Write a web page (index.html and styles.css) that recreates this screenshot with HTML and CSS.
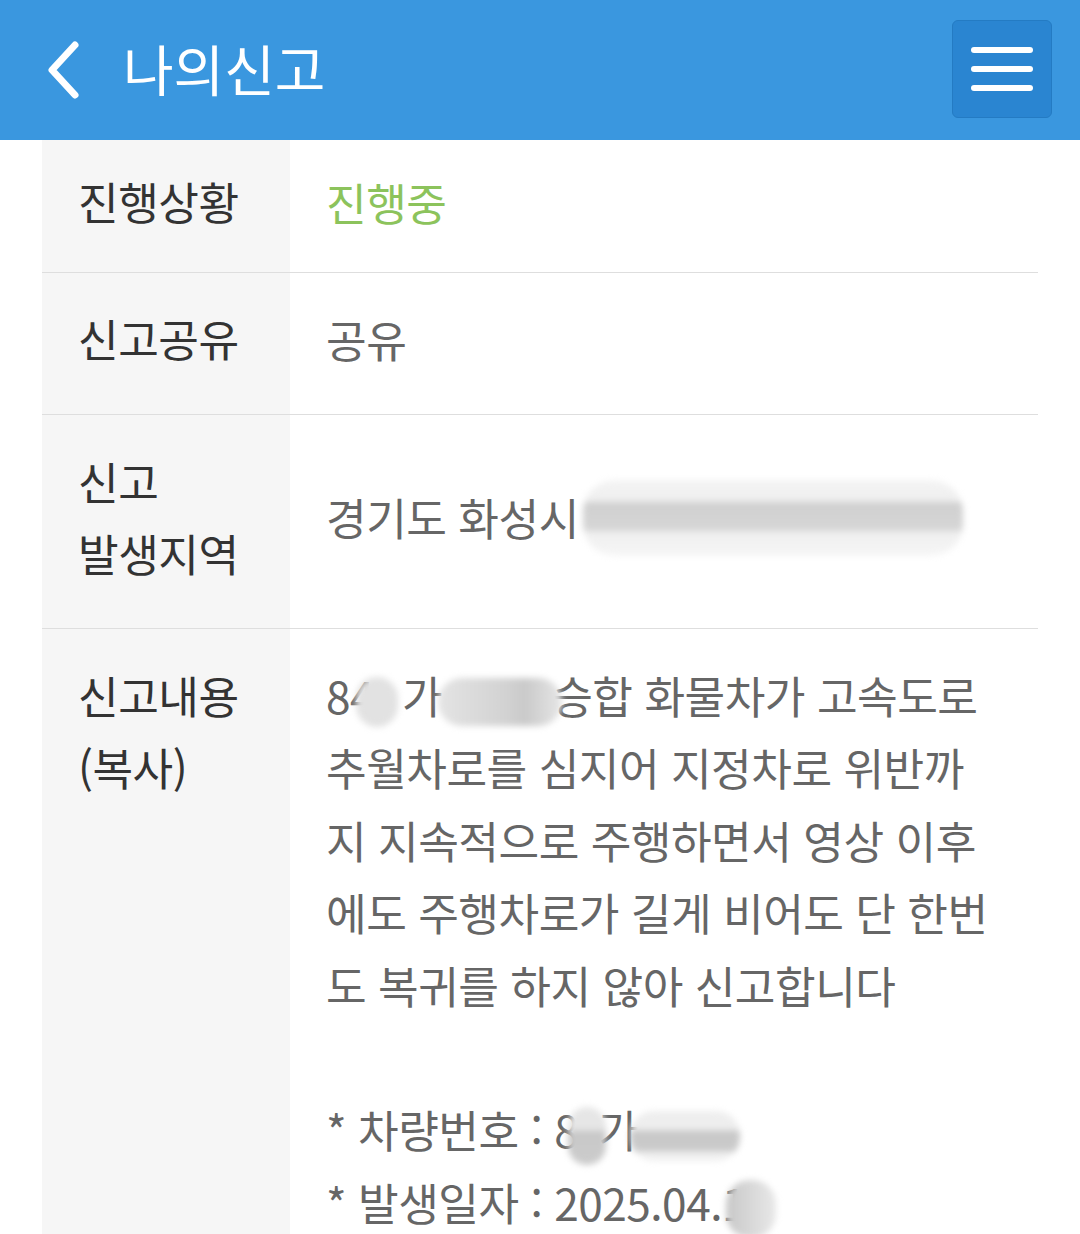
FILE: index.html
```html
<!DOCTYPE html>
<html lang="ko">
<head>
  <meta charset="UTF-8" />
  <meta name="viewport" content="width=device-width, initial-scale=1.0" />
  <title>나의신고</title>
  <link rel="stylesheet" href="styles.css">
</head>
<body>
  <header class="top-bar">
    <a class="back" href="#">
      <svg width="40" height="64" viewBox="0 0 40 64">
        <path d="M32 7 L9 32 L32 57" fill="none" stroke="#fff" stroke-width="7" stroke-linecap="round" stroke-linejoin="round"/>
      </svg>
    </a>
    <h1 class="title">나의신고</h1>
    <button class="menu-btn" type="button">
      <span></span>
      <span></span>
      <span></span>
    </button>
  </header>

  <div class="detail">
    <div class="row row-status">
      <div class="label">진행상황</div>
      <div class="value status">진행중</div>
    </div>
    <div class="row row-share">
      <div class="label">신고공유</div>
      <div class="value">공유</div>
    </div>
    <div class="row row-area">
      <div class="label">신고<br>발생지역</div>
      <div class="value">경기도 화성시 <span class="blur blur-addr"></span></div>
    </div>
    <div class="row row-content">
      <div class="label">신고내용<br>(복사)</div>
      <div class="value content">
        84<span class="blur blur-num"></span>가<span class="blur blur-plate"></span>승합 화물차가 고속도로<br>
        추월차로를 심지어 지정차로 위반까<br>
        지 지속적으로 주행하면서 영상 이후<br>
        에도 주행차로가 길게 비어도 단 한번<br>
        도 복귀를 하지 않아 신고합니다<br>
        <br>
        * 차량번호 : 8<span class="blur blur-num2"></span>가<span class="blur blur-plate2"></span><br>
        * 발생일자 : 2025.04.1<span class="blur blur-day"></span>
      </div>
    </div>
  </div>
</body>
</html>
```

FILE: styles.css
```css
body {
  margin: 0;
  background-color: #fff;
  font-family: "Noto Sans CJK KR", "Noto Sans", sans-serif;
  overflow: hidden;
}

.top-bar {
  height: 140px;
  background-color: #3a97df;
  display: flex;
  align-items: center;
  padding: 0 28px 0 43px;
  box-sizing: border-box;
}

.back {
  display: flex;
  width: 46px;
  height: 64px;
  align-items: center;
}

.title {
  margin: 0 0 0 34px;
  flex: 1;
  color: #fff;
  font-size: 55px;
  font-weight: 400;
  letter-spacing: 0;
  line-height: 1;
  padding-bottom: 6px;
}

.menu-btn {
  width: 100px;
  height: 98px;
  margin-top: -2px;
  background-color: #2a85d1;
  border: 1px solid #247bc3;
  border-radius: 6px;
  display: flex;
  flex-direction: column;
  align-items: center;
  justify-content: center;
  gap: 13px;
  padding: 0;
}

.menu-btn span {
  display: block;
  width: 62px;
  height: 6px;
  border-radius: 3px;
  background-color: #fff;
}

.detail {
  margin: 0 42px;
}

.row {
  display: grid;
  grid-template-columns: 248px 1fr;
  border-bottom: 1px solid #dedede;
  box-sizing: border-box;
}

.row-status { height: 133px; }
.row-share { height: 142px; }
.row-area { height: 214px; }
.row-content { border-bottom: none; height: 700px; }

.label,
.value {
  display: flex;
  align-items: center;
  padding: 0 36px;
  font-size: 44.2px;
  line-height: 72.4px;
  letter-spacing: -0.5px;
}

.label {
  background-color: #f6f6f6;
  color: #333;
  padding-bottom: 10px;
}

.value {
  color: #666;
  padding-bottom: 8px;
}

.row-area .label,
.row-content .label {
  display: block;
}

.row-area .label {
  padding-top: 30px;
}

.row-content .label {
  padding-top: 30px;
}

.status {
  color: #8cc35c;
}

.content {
  display: block;
  padding-top: 30px;
  white-space: nowrap;
}

.blur {
  display: inline-block;
  vertical-align: middle;
  border-radius: 24px;
  filter: blur(3px);
}

.blur-addr {
  width: 380px;
  height: 76px;
  margin-left: 4px;
  border-radius: 32px;
  background: linear-gradient(to bottom, #f4f4f4 0%, #efefef 28%, #d0d0d0 30%, #d6d6d6 66%, #efefef 68%, #f6f6f6 100%);
}

.blur-num {
  width: 42px;
  height: 50px;
  margin-left: -18px;
  margin-right: 4px;
  background-color: #e2e2e2;
}

.blur-plate {
  width: 124px;
  height: 48px;
  margin-left: -4px;
  margin-right: -10px;
  background: linear-gradient(to right, #e4e4e4, #d2d2d2 55%, #cacaca 70%, #e6e6e6);
}

.blur-num2 {
  width: 38px;
  height: 58px;
  margin-left: -10px;
  margin-right: -8px;
  background: linear-gradient(to bottom, #e6e6e6 40%, #c8c8c8 42%, #cccccc);
}

.blur-plate2 {
  width: 110px;
  height: 50px;
  margin-left: -8px;
  background: linear-gradient(to bottom, #eeeeee 38%, #c8c8c8 40%, #cbcbcb 80%, #f0f0f0 82%);
}

.blur-day {
  width: 50px;
  height: 58px;
  margin-left: -20px;
  background: linear-gradient(to right, #c8c8c8, #e8e8e8);
}
```
